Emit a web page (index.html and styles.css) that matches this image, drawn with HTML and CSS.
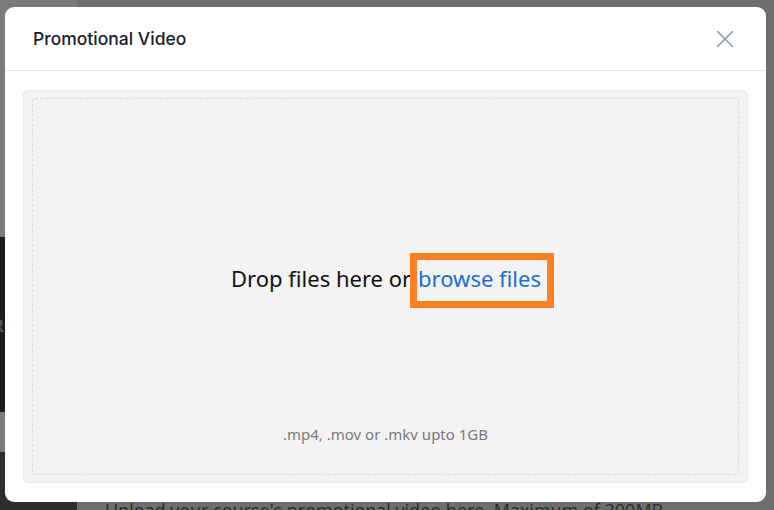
FILE: index.html
```html
<!DOCTYPE html>
<html lang="en">
<head>
  <meta charset="UTF-8">
  <meta name="viewport" content="width=device-width, initial-scale=1.0">
  <title>Promotional Video</title>
  <link rel="stylesheet" href="styles.css">
</head>
<body>

<div class="page">
  <div class="sidebar">
    <div class="side-block side-top"></div>
    <div class="side-block side-dark"><span class="side-letter">R</span></div>
    <div class="side-block side-mid"></div>
    <div class="side-block side-bottom"></div>
  </div>
  <div class="main">
    <p class="hint">Upload your course's promotional video here. Maximum of 200MB</p>
  </div>
</div>

<div class="backdrop">
  <div class="modal">
    <div class="modal-header">
      <h2 class="modal-title">Promotional Video</h2>
      <button class="close" aria-label="Close">
        <svg width="18" height="18" viewBox="0 0 18 18" fill="none" stroke="currentColor" stroke-width="1.6" stroke-linecap="round">
          <path d="M1.5 1.5 L16.5 16.5 M16.5 1.5 L1.5 16.5"/>
        </svg>
      </button>
    </div>
    <div class="modal-body">
      <div class="dropzone">
        <div class="drop-inner">
          <p class="drop-text">Drop files here or<span class="browse">browse files</span></p>
          <p class="drop-note">.mp4, .mov or .mkv upto 1GB</p>
        </div>
      </div>
    </div>
  </div>
</div>

</body>
</html>
```

FILE: styles.css
```css
html, body {
  margin: 0;
  height: 100%;
  overflow: hidden;
}
body {
  background: #7a7a7a;
  font-family: "Noto Sans", sans-serif;
}

/* dimmed page behind the dialog */
.page {
  display: grid;
  grid-template-columns: 77px 1fr;
  height: 100%;
}
.sidebar {
  display: flex;
  flex-direction: column;
}
.side-top {
  height: 237px;
  background: #7a7a7a;
}
.side-dark {
  height: 175px;
  background: #1b1b19;
  color: #555;
  display: flex;
  align-items: center;
}
.side-letter {
  font-size: 18px;
  font-weight: bold;
  margin-left: -8px;
}
.side-mid {
  height: 40px;
  background: #7c7c7c;
}
.side-bottom {
  flex: 1;
  background: #2e2e2e;
}
.main {
  background: #6e6e6e;
  padding: 498px 0 0 28px;
}
.hint {
  margin: 0;
  font-family: "Open Sans", sans-serif;
  font-size: 18px;
  color: #2a2a2a;
  white-space: nowrap;
}

/* dialog */
.backdrop {
  position: fixed;
  inset: 0;
  padding: 7px 8px 8px 5px;
}
.modal {
  height: 495px;
  background: #fff;
  border-radius: 9px;
  display: flex;
  flex-direction: column;
}
.modal-header {
  height: 63px;
  display: flex;
  align-items: center;
  justify-content: space-between;
  padding: 0 32px 0 28px;
  border-bottom: 1px solid #e2e8f0;
}
.modal-title {
  margin: 0;
  font-family: Inter, sans-serif;
  font-size: 17.5px;
  font-weight: 500;
  color: #1a202c;
}
.close {
  border: 0;
  background: none;
  padding: 0;
  color: #8a9aaf;
  display: flex;
}
.modal-body {
  flex: 1;
  padding: 19px 18px 19px 18px;
  display: flex;
}
.dropzone {
  flex: 1;
  background: #f3f3f3;
  border: 1px solid #e8e8e8;
  border-radius: 5px;
  padding: 7px 8px;
  display: flex;
}
.drop-inner {
  flex: 1;
  border: 1px dashed #dcdcdc;
  border-radius: 3px;
  display: flex;
  flex-direction: column;
  align-items: center;
  font-family: "Noto Sans", sans-serif;
}
.drop-text {
  margin: 164px 0 0;
  padding-left: 14px;
  font-size: 22px;
  color: #111;
}
.browse {
  color: #1a6fd4;
  border: 7px solid #fe7f24;
  padding: 3px 6px 8px 1px;
  margin-left: -1px;
}
.drop-note {
  margin: 131px 0 0;
  font-size: 15px;
  color: #7a7a7a;
}
```
